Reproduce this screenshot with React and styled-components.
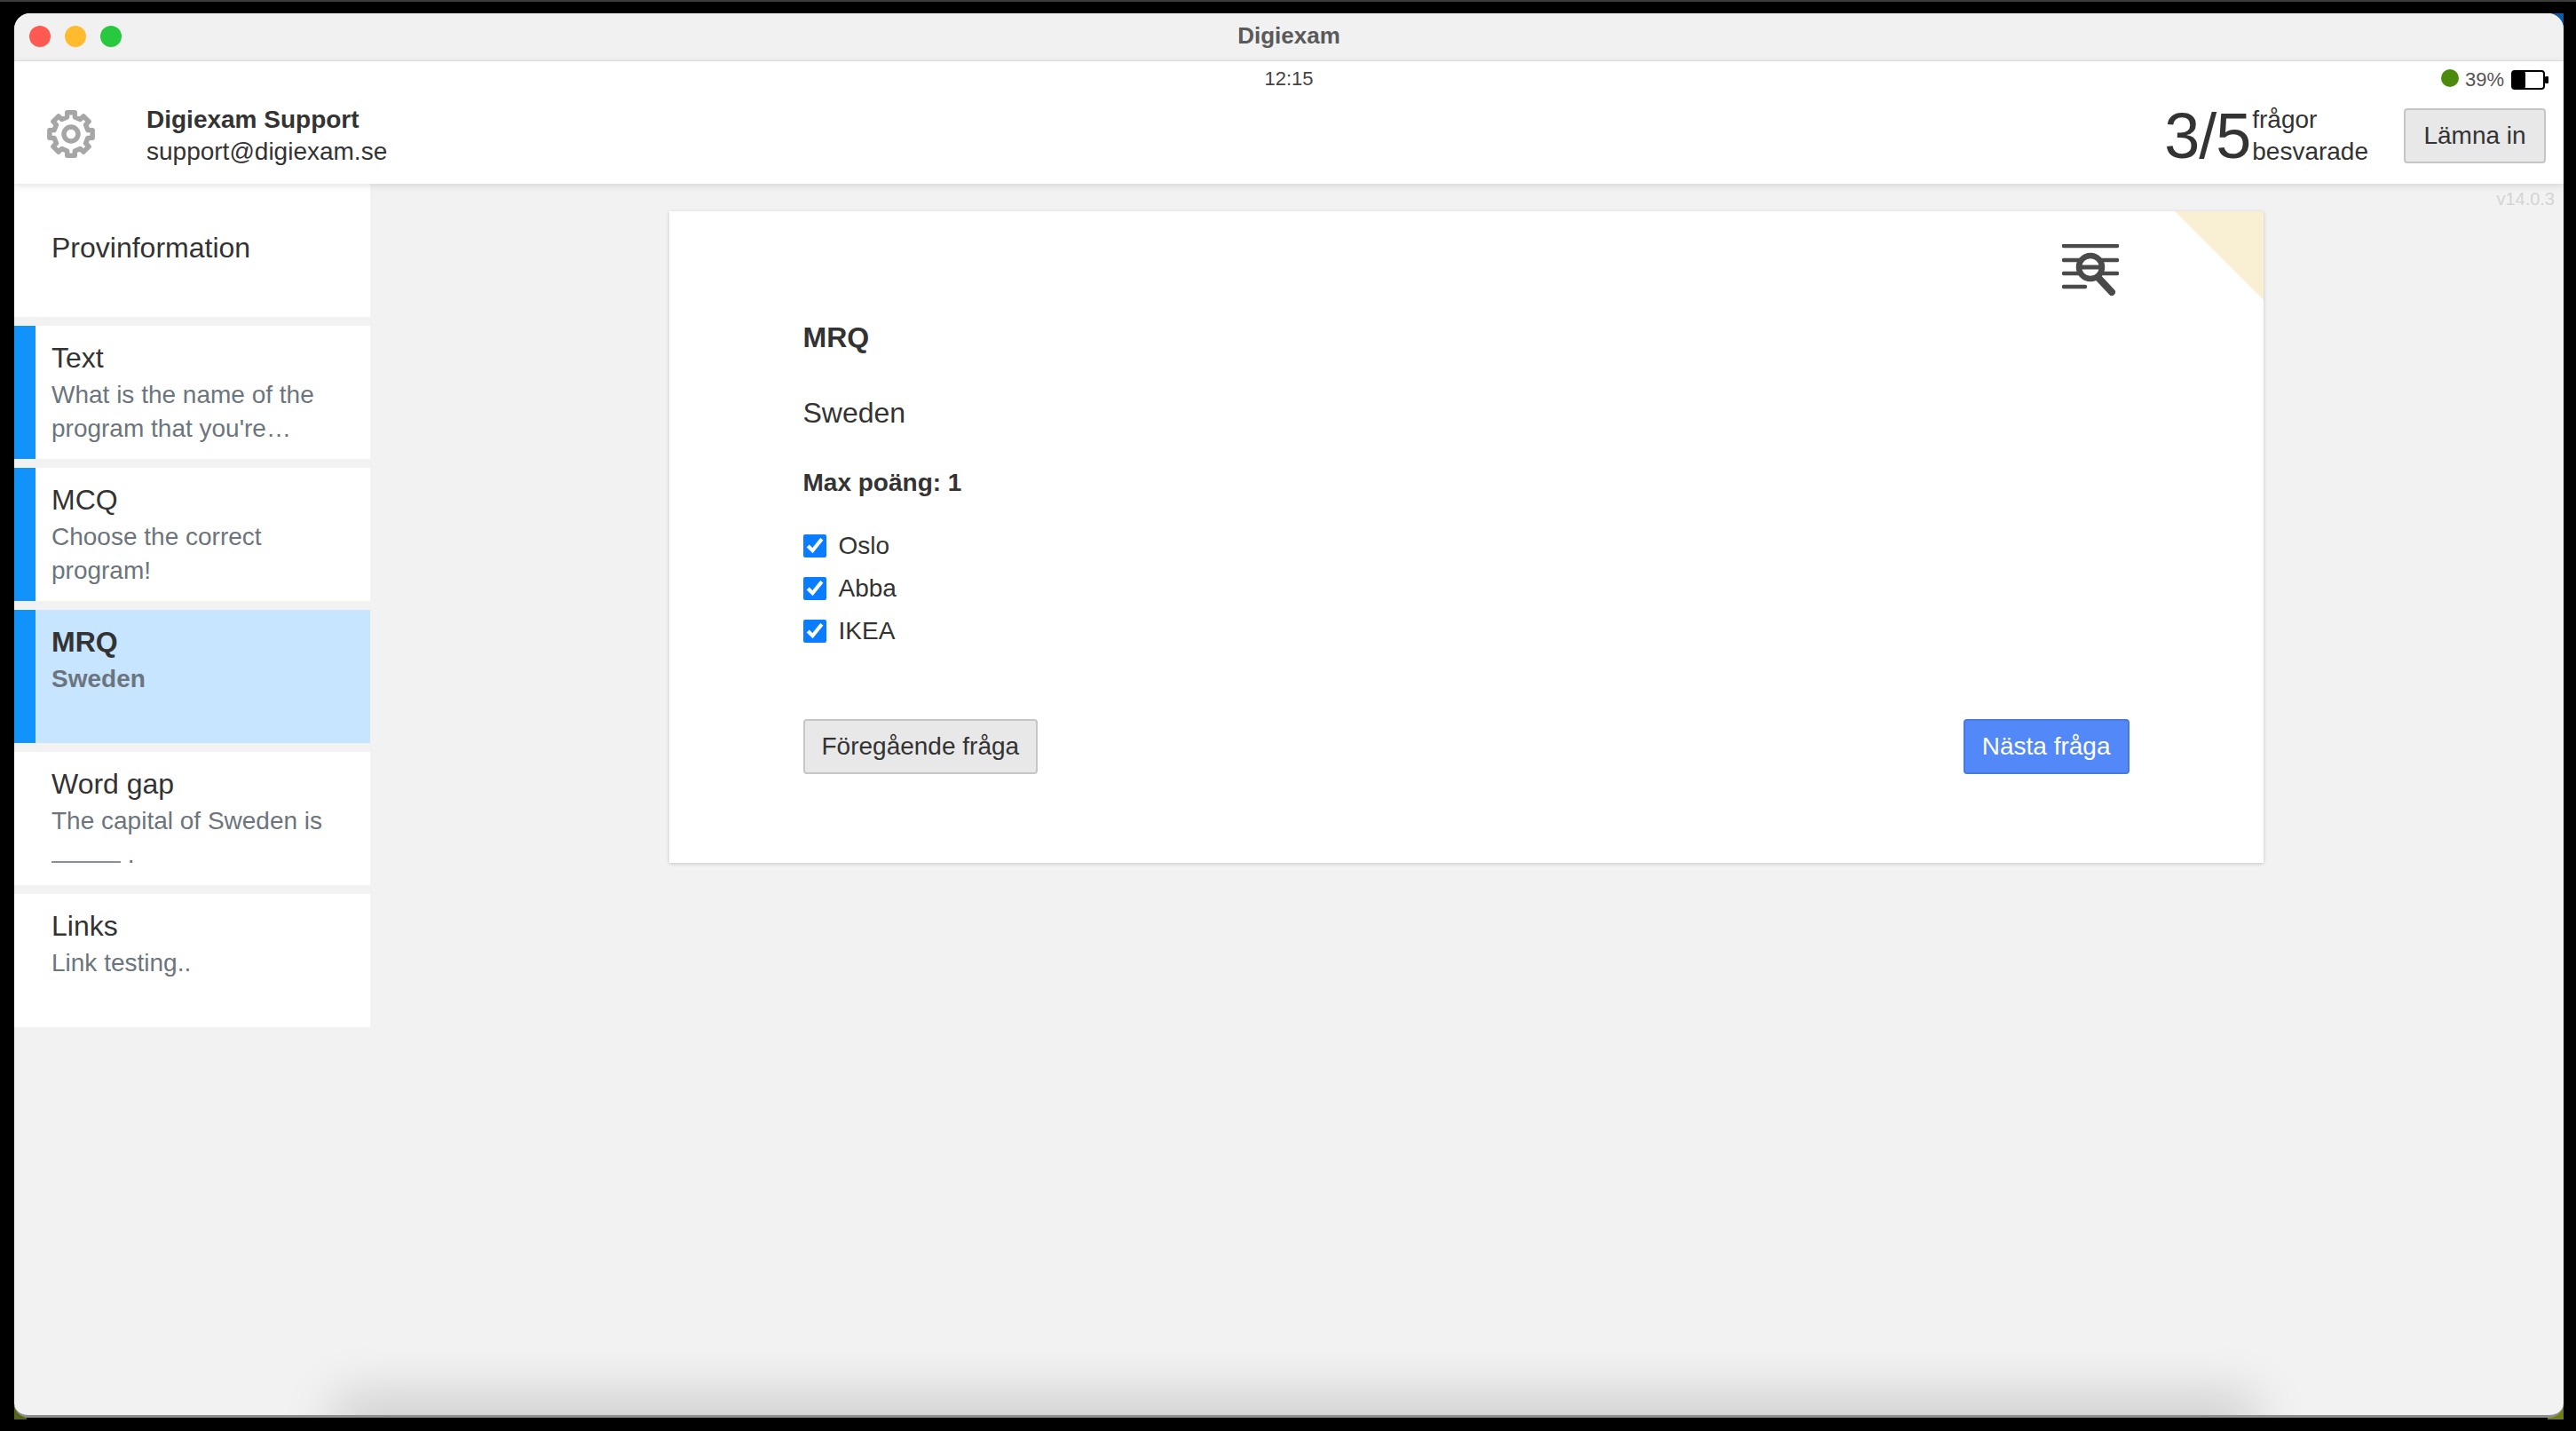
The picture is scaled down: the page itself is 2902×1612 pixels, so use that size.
import React from 'react'
import styled, { createGlobalStyle } from 'styled-components'

const GlobalStyle = createGlobalStyle`
  html, body {
    margin: 0;
    padding: 0;
    background: #000;
  }
  * {
    box-sizing: border-box;
  }
`

const Screen = styled.div`
  width: 2902px;
  height: 1612px;
  padding: 13px 14px 15px 16px;
  border-top: 2px solid #3c3c3c;
  background:
    linear-gradient(#0b5ca8, #0b5ca8) 2868px 13px / 20px 20px no-repeat,
    linear-gradient(#6f7d12, #6f7d12) 2870px 1578px / 18px 19px no-repeat,
    linear-gradient(#55651a, #55651a) 16px 1582px / 14px 15px no-repeat,
    #000;
  font-family: "Liberation Sans", Arial, sans-serif;
  color: #333;
`

const AppWindow = styled.div`
  position: relative;
  width: 2872px;
  height: 1582px;
  display: flex;
  flex-direction: column;
  overflow: hidden;
  border-radius: 18px 18px 16px 16px;
  border-bottom: 3px solid #8f8f8f;
  background: #f2f2f2;
`

const TitleBar = styled.div`
  position: relative;
  flex: 0 0 54px;
  display: flex;
  align-items: center;
  justify-content: center;
  padding-bottom: 2px;
  background: #f1f1f1;
  border-bottom: 1px solid #e2e2e2;
  font-size: 26px;
  font-weight: 700;
  color: #5a5a5a;
`

const Lights = styled.div`
  position: absolute;
  left: 17px;
  top: 14px;
  display: flex;
  gap: 16px;
`

const Light = styled.span`
  width: 24px;
  height: 24px;
  border-radius: 50%;
  background: ${(p) => p.$color};
`

const Header = styled.header`
  position: relative;
  z-index: 2;
  flex: 0 0 138px;
  display: flex;
  flex-direction: column;
  background: #fff;
  box-shadow: 0 2px 8px rgba(0, 0, 0, 0.12);
`

const StatusRow = styled.div`
  position: relative;
  height: 34px;
  padding-top: 6px;
  display: flex;
  align-items: center;
  justify-content: center;
  font-size: 22px;
  color: #444;
`

const Power = styled.div`
  position: absolute;
  right: 17px;
  top: 8px;
  display: flex;
  align-items: center;
  gap: 8px;
  color: #555;
`

const Dot = styled.span`
  width: 20px;
  height: 20px;
  margin-right: -1px;
  margin-top: -4px;
  border-radius: 50%;
  background: #4c8a0e;
`

const UserRow = styled.div`
  flex: 1;
  display: flex;
  align-items: center;
  padding: 0 20px 4px 35px;
`

const User = styled.div`
  margin-left: 56px;
  font-size: 28px;
  line-height: 36px;
`

const UserName = styled.div`
  font-weight: 700;
`

const GearSvg = styled.svg`
  margin-top: -4px;
`

const Progress = styled.div`
  margin-left: auto;
  display: flex;
  align-items: center;
`

const Count = styled.div`
  font-size: 72px;
  line-height: 72px;
  letter-spacing: -1px;
`

const CountLabel = styled.div`
  margin-left: 2px;
  font-size: 28px;
  line-height: 36px;
`

const Button = styled.button`
  height: 62px;
  padding: 0 19px;
  border-radius: 4px;
  border: 2px solid ${(p) => (p.$primary ? '#4a7ad8' : '#c6c6c6')};
  background: ${(p) => (p.$primary ? '#5288f8' : '#e8e8e8')};
  color: ${(p) => (p.$primary ? '#fff' : '#333')};
  font-family: inherit;
  font-size: 28px;
`

const SubmitButton = styled(Button)`
  margin-left: 40px;
  width: 160px;
  padding: 0;
`

const Body = styled.div`
  position: relative;
  flex: 1;
  display: flex;
  min-height: 0;
`

const Sidebar = styled.nav`
  flex: 0 0 401px;
  display: flex;
  flex-direction: column;
  gap: 10px;
`

const Item = styled.div`
  height: 150px;
  padding: ${(p) => (p.$info ? '52px 18px 0' : '16px 18px 0')};
  padding-left: ${(p) => (p.$answered ? '18px' : '42px')};
  border-left: ${(p) => (p.$answered ? '24px solid #1193fb' : 'none')};
  background: ${(p) => (p.$active ? '#c7e5ff' : '#fff')};
  font-weight: ${(p) => (p.$active ? 700 : 400)};
`

const ItemTitle = styled.div`
  font-size: 32px;
  line-height: 40px;
  color: #333;
`

const ItemText = styled.div`
  margin-top: 3px;
  font-size: 28px;
  line-height: 38px;
  color: #6c757d;
`

const Gap = styled.span`
  display: inline-block;
  width: 78px;
  border-bottom: 2px solid #8a9096;
`

const Main = styled.main`
  flex: 1;
  padding: 31px 2px 0 0;
`

const Version = styled.div`
  position: absolute;
  right: 10px;
  top: 6px;
  font-size: 20px;
  color: #d4d4d4;
`

const Card = styled.section`
  position: relative;
  width: 1796px;
  height: 734px;
  margin: 0 auto;
  padding: 0 151px;
  background: #fff;
  box-shadow: 0 1px 4px rgba(0, 0, 0, 0.18);
`

const Corner = styled.div`
  position: absolute;
  top: 0;
  right: 0;
  border-style: solid;
  border-width: 0 100px 100px 0;
  border-color: transparent #f9efd3 transparent transparent;
`

const Tools = styled.div`
  display: flex;
  justify-content: flex-end;
  padding: 37px 12px 0 0;
  height: 105px;
`

const QuestionTitle = styled.h2`
  margin: 17px 0 0;
  font-size: 32px;
  line-height: 40px;
  font-weight: 700;
`

const QuestionText = styled.p`
  margin: 45px 0 0;
  font-size: 32px;
  line-height: 40px;
`

const MaxPoints = styled.p`
  margin: 41px 0 0;
  font-size: 28px;
  line-height: 36px;
  font-weight: 700;
`

const Options = styled.div`
  margin-top: 37px;
  display: flex;
  flex-direction: column;
  gap: 16px;
`

const Option = styled.label`
  display: flex;
  align-items: center;
  gap: 14px;
  height: 32px;
  font-size: 28px;
`

const Check = styled.input`
  width: 26px;
  height: 26px;
  margin: 0;
  accent-color: #0a7cff;
`

const Actions = styled.div`
  margin-top: 83px;
  display: flex;
  justify-content: space-between;
`

const BottomShade = styled.div`
  position: absolute;
  left: 382px;
  right: 368px;
  bottom: -20px;
  height: 20px;
  box-shadow: 0 0 60px 20px rgba(0, 0, 0, 0.17);
`

const items = [
  { title: 'Text', text: "What is the name of the program that you're…", answered: true },
  { title: 'MCQ', text: 'Choose the correct program!', answered: true },
  { title: 'MRQ', text: 'Sweden', answered: true, active: true },
  { title: 'Word gap', text: <>The capital of Sweden is <Gap /> .</> },
  { title: 'Links', text: 'Link testing..' },
]

// eight teeth, each one a trapezoid between the root and tip radius
const gearPoints = Array.from({ length: 8 }, (_, i) => {
  const a = (i * 45 - 90) * (Math.PI / 180)
  const at = (r, d) => {
    const t = a + (d * Math.PI) / 180
    return `${(29 + r * Math.cos(t)).toFixed(2)},${(29 + r * Math.sin(t)).toFixed(2)}`
  }
  return [at(19.5, -13), at(24.5, -10), at(24.5, 10), at(19.5, 13)].join(' ')
}).join(' ')

const GearIcon = () => (
  <GearSvg width="58" height="58" viewBox="0 0 58 58" fill="none" stroke="#a6a6a6" strokeWidth="5.5" strokeLinejoin="round">
    <polygon points={gearPoints} />
    <circle cx="29" cy="29" r="8" />
  </GearSvg>
)

const BatteryIcon = () => (
  <svg width="42" height="22" viewBox="0 0 42 22">
    <rect x="1" y="1" width="36" height="20" rx="3" fill="#fff" stroke="#000" strokeWidth="2" />
    <rect x="1" y="1" width="15" height="20" rx="3" fill="#000" />
    <rect x="38" y="7" width="4" height="8" rx="1" fill="#000" />
  </svg>
)

const LookupIcon = () => (
  <svg width="64" height="60" viewBox="0 0 64 60" fill="none" stroke="#4a4a4a">
    <path d="M2 2h60M2 18h60M2 33h60M2 48h24" strokeWidth="4.5" strokeLinecap="round" />
    <circle cx="32" cy="26" r="13" fill="#fff" strokeWidth="6.5" />
    <path d="M20 26h24" strokeWidth="5" />
    <path d="M41 38l15 16" strokeWidth="8" strokeLinecap="round" />
  </svg>
)

export default function App() {
  return (
    <Screen>
      <GlobalStyle />
      <AppWindow>
        <TitleBar>
          <Lights>
            <Light $color="#ff5a52" />
            <Light $color="#febb2e" />
            <Light $color="#28c83f" />
          </Lights>
          Digiexam
        </TitleBar>
        <Header>
          <StatusRow>
            12:15
            <Power>
              <Dot />
              39%
              <BatteryIcon />
            </Power>
          </StatusRow>
          <UserRow>
            <GearIcon />
            <User>
              <UserName>Digiexam Support</UserName>
              <div>support@digiexam.se</div>
            </User>
            <Progress>
              <Count>3/5</Count>
              <CountLabel>
                <div>frågor</div>
                <div>besvarade</div>
              </CountLabel>
              <SubmitButton>Lämna in</SubmitButton>
            </Progress>
          </UserRow>
        </Header>
        <Body>
          <Sidebar>
            <Item $info>
              <ItemTitle>Provinformation</ItemTitle>
            </Item>
            {items.map((item) => (
              <Item key={item.title} $answered={item.answered} $active={item.active}>
                <ItemTitle>{item.title}</ItemTitle>
                <ItemText>{item.text}</ItemText>
              </Item>
            ))}
          </Sidebar>
          <Main>
            <Version>v14.0.3</Version>
            <Card>
              <Corner />
              <Tools>
                <LookupIcon />
              </Tools>
              <QuestionTitle>MRQ</QuestionTitle>
              <QuestionText>Sweden</QuestionText>
              <MaxPoints>Max poäng: 1</MaxPoints>
              <Options>
                {['Oslo', 'Abba', 'IKEA'].map((option) => (
                  <Option key={option}>
                    <Check type="checkbox" defaultChecked />
                    {option}
                  </Option>
                ))}
              </Options>
              <Actions>
                <Button>Föregående fråga</Button>
                <Button $primary>Nästa fråga</Button>
              </Actions>
            </Card>
          </Main>
        </Body>
        <BottomShade />
      </AppWindow>
    </Screen>
  )
}
